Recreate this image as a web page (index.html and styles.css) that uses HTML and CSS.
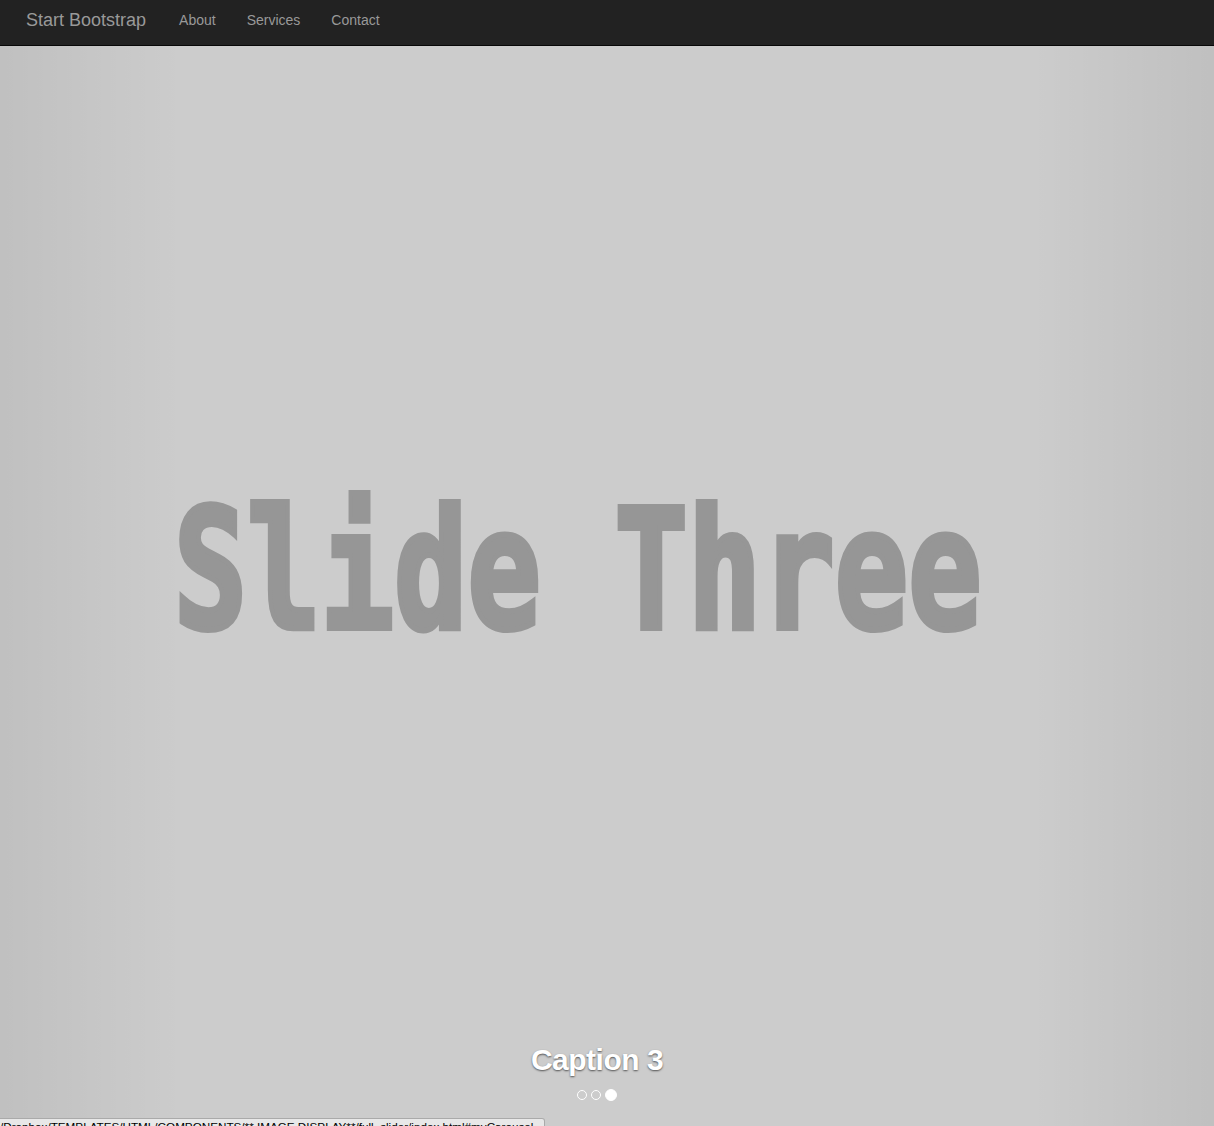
FILE: index.html
```html
<!DOCTYPE html>
<html>
<head>
<meta charset="utf-8">
<title>Full Slider</title>
<link rel="stylesheet" href="styles.css">
</head>
<body>
<nav class="navbar">
  <a class="brand" href="#">Start Bootstrap</a>
  <ul class="nav">
    <li><a href="#about">About</a></li>
    <li><a href="#services">Services</a></li>
    <li><a href="#contact">Contact</a></li>
  </ul>
</nav>
<div class="carousel">
  <div class="slide">
    <div class="slide-text">Slide Three</div>
  </div>
  <a class="control left" href="#"></a>
  <a class="control right" href="#"></a>
  <div class="caption">Caption 3</div>
  <ol class="indicators">
    <li></li>
    <li></li>
    <li class="active"></li>
  </ol>
</div>
<div class="status">/Dropbox/TEMPLATES/HTML/COMPONENTS/** IMAGE DISPLAY**/full_slider/index.html#myCarousel</div>
</body>
</html>
```
FILE: styles.css
```css
html, body {
  margin: 0;
  padding: 0;
  height: 100%;
  overflow: hidden;
}
body {
  font-family: "Liberation Sans", Arial, sans-serif;
  background: #ccc;
}
.navbar {
  background: #222;
  border-bottom: 1px solid #080808;
  display: flex;
  align-items: center;
  padding-bottom: 5px;
  box-sizing: content-box;
  height: 40px;
}
.brand {
  color: #999;
  font-size: 18px;
  text-decoration: none;
  padding-left: 26px;
  margin-right: 18px;
  line-height: 20px;
}
.nav {
  list-style: none;
  margin: 0;
  padding: 0;
  display: flex;
}
.nav a {
  display: block;
  color: #999;
  font-size: 14px;
  text-decoration: none;
  padding: 0 15px;
  line-height: 20px;
}
.nav li:nth-child(n+2) a {
  padding-left: 16px;
}
.carousel {
  position: relative;
  height: calc(100% - 46px);
  overflow: hidden;
}
.slide {
  height: 100%;
  display: flex;
  align-items: center;
  justify-content: center;
  background: #ccc;
}
.slide-text {
  font-family: "DejaVu Sans Mono", monospace;
  font-weight: bold;
  font-size: 166px;
  color: #969696;
  -webkit-text-stroke: 6px #969696;
  white-space: nowrap;
  transform: translateX(-29px) scaleX(0.735);
  margin-top: -30px;
  line-height: 1;
}
.control {
  position: absolute;
  top: 0;
  bottom: 0;
  width: 15%;
  opacity: 0.5;
}
.control.left {
  left: 0;
  background: linear-gradient(to right, rgba(0,0,0,0.12) 0%, rgba(0,0,0,0) 100%);
}
.control.right {
  right: 0;
  background: linear-gradient(to right, rgba(0,0,0,0) 0%, rgba(0,0,0,0.12) 100%);
}
.caption {
  position: absolute;
  left: 15%;
  right: 15%;
  padding-right: 20px;
  bottom: 49px;
  text-align: center;
  color: #fff;
  font-size: 30px;
  font-weight: bold;
  letter-spacing: -0.5px;
  text-shadow: 0 1px 2px rgba(0,0,0,0.6);
}
.indicators {
  position: absolute;
  left: 0;
  right: 20px;
  bottom: 25px;
  margin: 0;
  padding: 0;
  list-style: none;
  display: flex;
  justify-content: center;
  align-items: center;
  gap: 4px;
}
.indicators li {
  width: 10px;
  height: 10px;
  border: 1px solid #fff;
  border-radius: 50%;
  box-sizing: border-box;
  margin: 1px 0;
}
.indicators li.active {
  width: 12px;
  height: 12px;
  background: #fff;
  margin: 0;
}
.status {
  position: absolute;
  left: 0;
  bottom: -8px;
  width: 545px;
  height: 16px;
  background: #e8e8e8;
  border: 1px solid #aaa;
  border-left: none;
  border-radius: 0 3px 0 0;
  font-size: 11.7px;
  line-height: 16px;
  color: #000;
  white-space: nowrap;
  overflow: hidden;
  box-sizing: border-box;
}
```
